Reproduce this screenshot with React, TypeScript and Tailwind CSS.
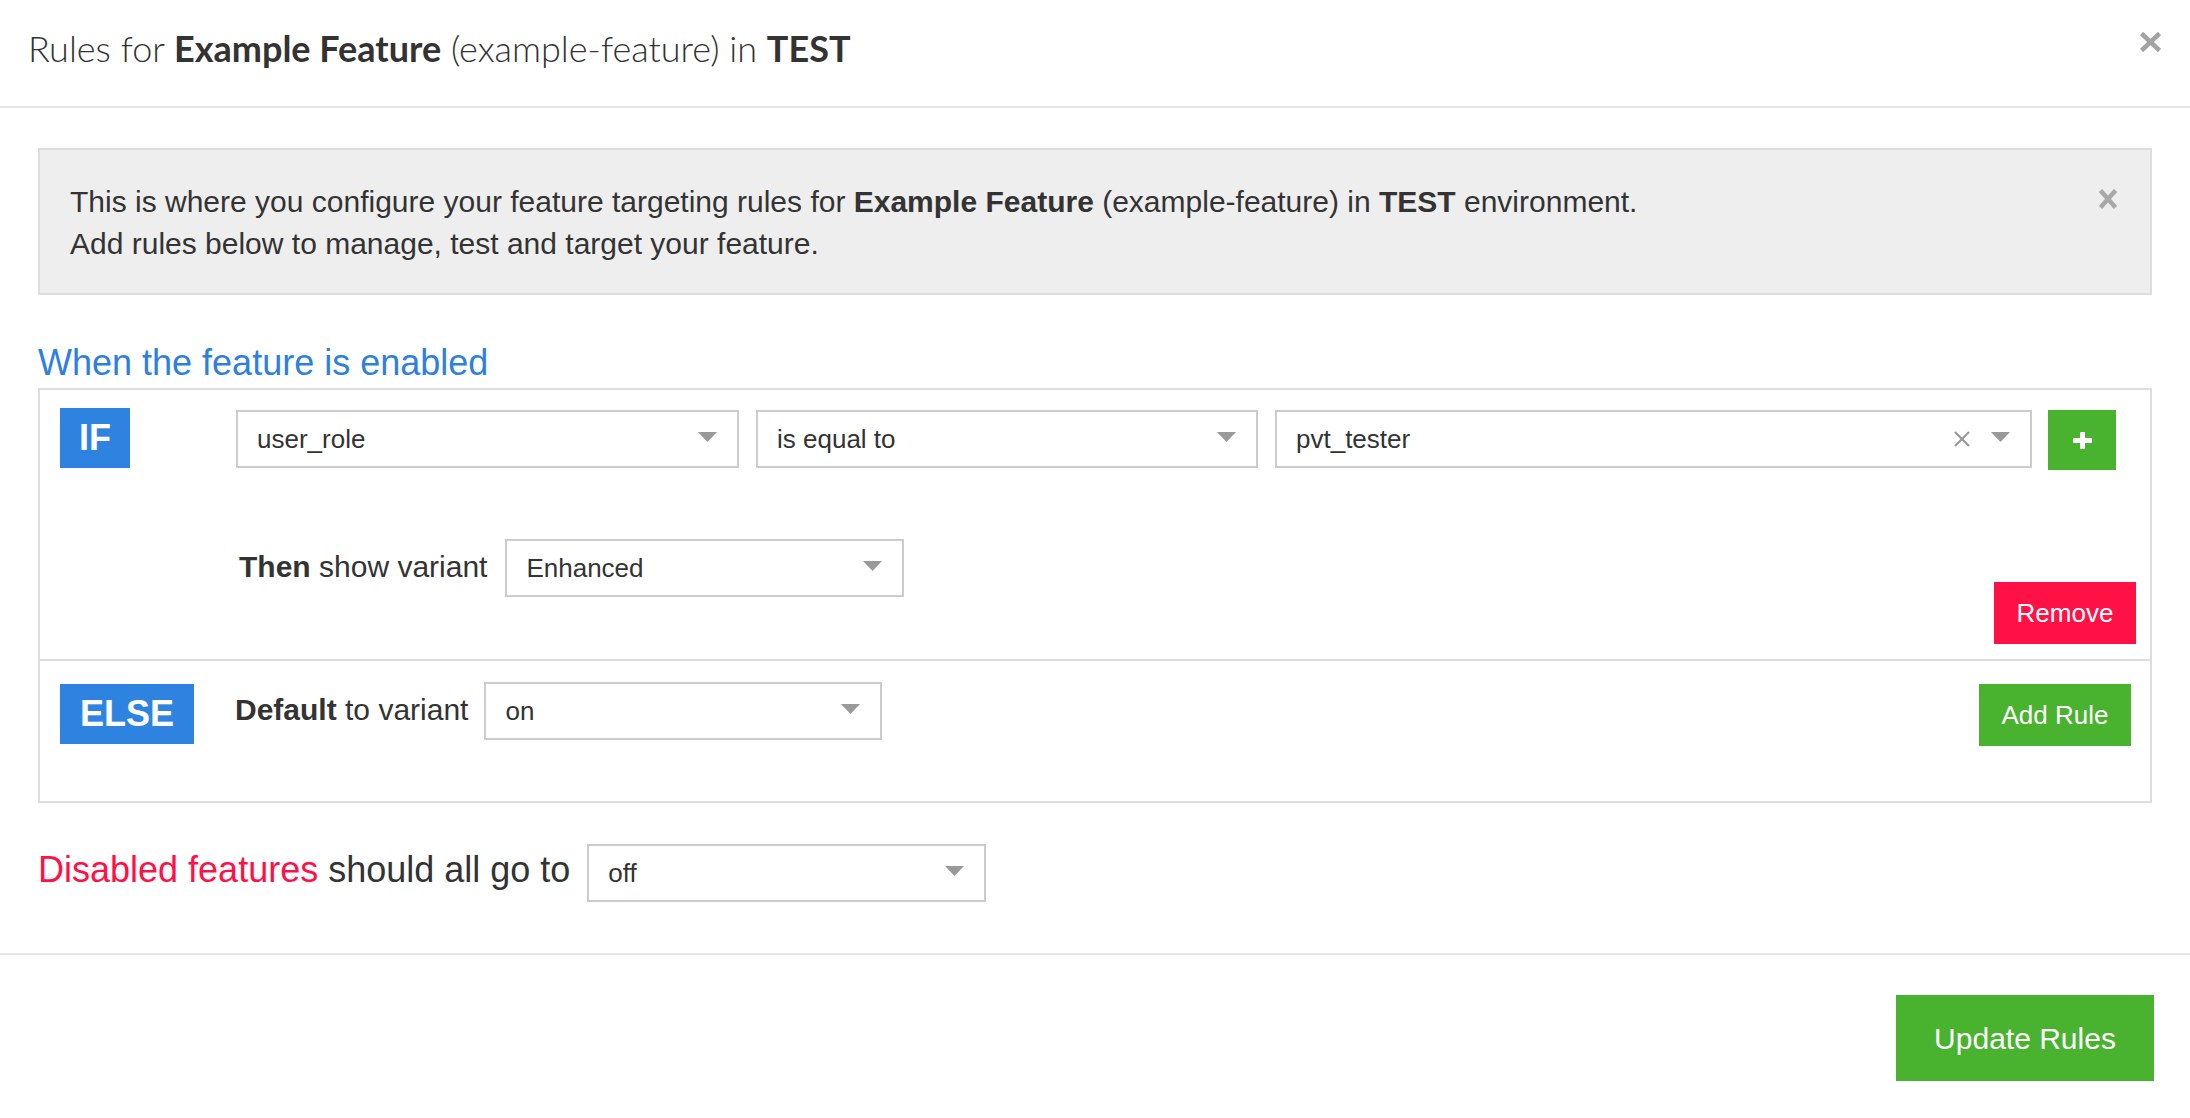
import React from "react";

function Caret() {
  return (
    <svg width="19" height="10" viewBox="0 0 19 10" className="mb-[5px] shrink-0">
      <polygon points="0,0 19,0 9.5,10" fill="#999" />
    </svg>
  );
}

function Select({ value, w, clear }: { value: string; w: string; clear?: boolean }) {
  return (
    <div className={`flex h-[58px] shrink-0 items-center border-2 border-[#ccc] bg-white pl-[19px] pr-[20px] ${w}`}>
      <span className="flex-1 text-[26px] leading-none text-[#333]">{value}</span>
      {clear && (
        <svg width="18" height="16" viewBox="0 0 18 16" className="mr-[20px] shrink-0">
          <line x1="2" y1="1" x2="16" y2="15" stroke="#999" strokeWidth="2.2" />
          <line x1="16" y1="1" x2="2" y2="15" stroke="#999" strokeWidth="2.2" />
        </svg>
      )}
      <Caret />
    </div>
  );
}

export default function App() {
  return (
    <div className="h-[1118px] w-[2190px] bg-white font-['Liberation_Sans',Arial,sans-serif] text-[#333]">
      {/* Header */}
      <div className="flex h-[108px] items-start justify-between border-b-2 border-[#e5e5e5]">
        <h1 className="ml-[28px] mt-[27px] font-['Lato',sans-serif] text-[36px] font-light leading-[42px] text-[#333]">
          Rules for <span className="font-bold">Example Feature</span> (example-feature) in{" "}
          <span className="font-bold">TEST</span>
        </h1>
        <svg width="23" height="22" viewBox="0 0 23 22" className="mr-[28px] mt-[31px]">
          <line x1="2.5" y1="2.5" x2="20.5" y2="19.5" stroke="#a3a3a3" strokeWidth="4.5" />
          <line x1="20.5" y1="2.5" x2="2.5" y2="19.5" stroke="#a3a3a3" strokeWidth="4.5" />
        </svg>
      </div>

      {/* Body */}
      <div className="px-[38px] pb-[51px] pt-[40px]">
        <div className="flex h-[147px] justify-between border-2 border-[#dddddd] bg-[#eeeeee] pl-[30px] pt-[31px]">
          <p className="text-[30px] leading-[42px] text-[#333]">
            This is where you configure your feature targeting rules for <b>Example Feature</b> (example-feature) in{" "}
            <b>TEST</b> environment.
            <br />
            Add rules below to manage, test and target your feature.
          </p>
          <svg width="20" height="22" viewBox="0 0 20 22" className="mr-[32px] mt-[7px] shrink-0">
            <line x1="2.5" y1="2.5" x2="17.5" y2="19.5" stroke="#a8a8a8" strokeWidth="4.5" />
            <line x1="17.5" y1="2.5" x2="2.5" y2="19.5" stroke="#a8a8a8" strokeWidth="4.5" />
          </svg>
        </div>

        <h2 className="mt-[46px] text-[36px] leading-[44px] text-[#2e80df]">When the feature is enabled</h2>

        <div className="mt-[3px] border-2 border-[#dddddd]">
          {/* IF section */}
          <div className="flex border-b-2 border-[#dddddd] pb-[15px] pl-[20px] pr-[14px] pt-[18px]">
            <div className="flex h-[60px] w-[70px] shrink-0 items-center justify-center bg-[#2e83e1] text-[36px] font-bold text-white">
              IF
            </div>
            <div className="ml-[106px] mt-[2px] flex flex-1 flex-col">
              <div className="flex items-start">
                <div className="flex gap-[17px]">
                  <Select value="user_role" w="w-[503px]" />
                  <Select value="is equal to" w="w-[502px]" />
                  <Select value="pvt_tester" w="w-[757px]" clear />
                </div>
                <button className="ml-[16px] flex h-[60px] w-[68px] items-center justify-center bg-[#49b22f]">
                  <svg width="19" height="17" viewBox="0 0 19 17">
                    <rect x="0" y="6" width="19" height="5" rx="1" fill="#fff" />
                    <rect x="7" y="0" width="5" height="17" rx="1" fill="#fff" />
                  </svg>
                </button>
              </div>
              <div className="flex items-start justify-between">
                <div className="ml-[3px] mt-[69px] flex items-center">
                  <span className="mb-[2px] text-[30px] leading-none">
                    <b>Then</b> show variant
                  </span>
                  <div className="ml-[18px]">
                    <Select value="Enhanced" w="w-[399px]" />
                  </div>
                </div>
                <button className="mt-[112px] h-[62px] w-[142px] bg-[#ff1045] text-[26px] text-white">Remove</button>
              </div>
            </div>
          </div>

          {/* ELSE section */}
          <div className="flex h-[140px] items-start pl-[20px] pr-[19px] pt-[21px]">
            <div className="mt-[2px] flex h-[60px] w-[134px] shrink-0 items-center justify-center bg-[#2e83e1] text-[36px] font-bold text-white">
              ELSE
            </div>
            <div className="ml-[41px] flex h-[56px] items-center text-[30px] leading-none">
              <span>
                <b>Default</b> to variant
              </span>
            </div>
            <div className="ml-[16px]">
              <Select value="on" w="w-[398px]" />
            </div>
            <button className="ml-auto mt-[2px] h-[62px] w-[152px] bg-[#49b22f] text-[26px] text-white">Add Rule</button>
          </div>
        </div>

        <div className="mt-[41px] flex items-center">
          <span className="mb-[7px] text-[36px] leading-none">
            <span className="text-[#ff1045]">Disabled features</span> should all go to
          </span>
          <div className="ml-[17px]">
            <Select value="off" w="w-[399px]" />
          </div>
        </div>
      </div>

      {/* Footer */}
      <div className="flex justify-end border-t-2 border-[#e5e5e5] pr-[36px] pt-[40px]">
        <button className="h-[86px] w-[258px] bg-[#49b22f] text-[30px] text-white">Update Rules</button>
      </div>
    </div>
  );
}
